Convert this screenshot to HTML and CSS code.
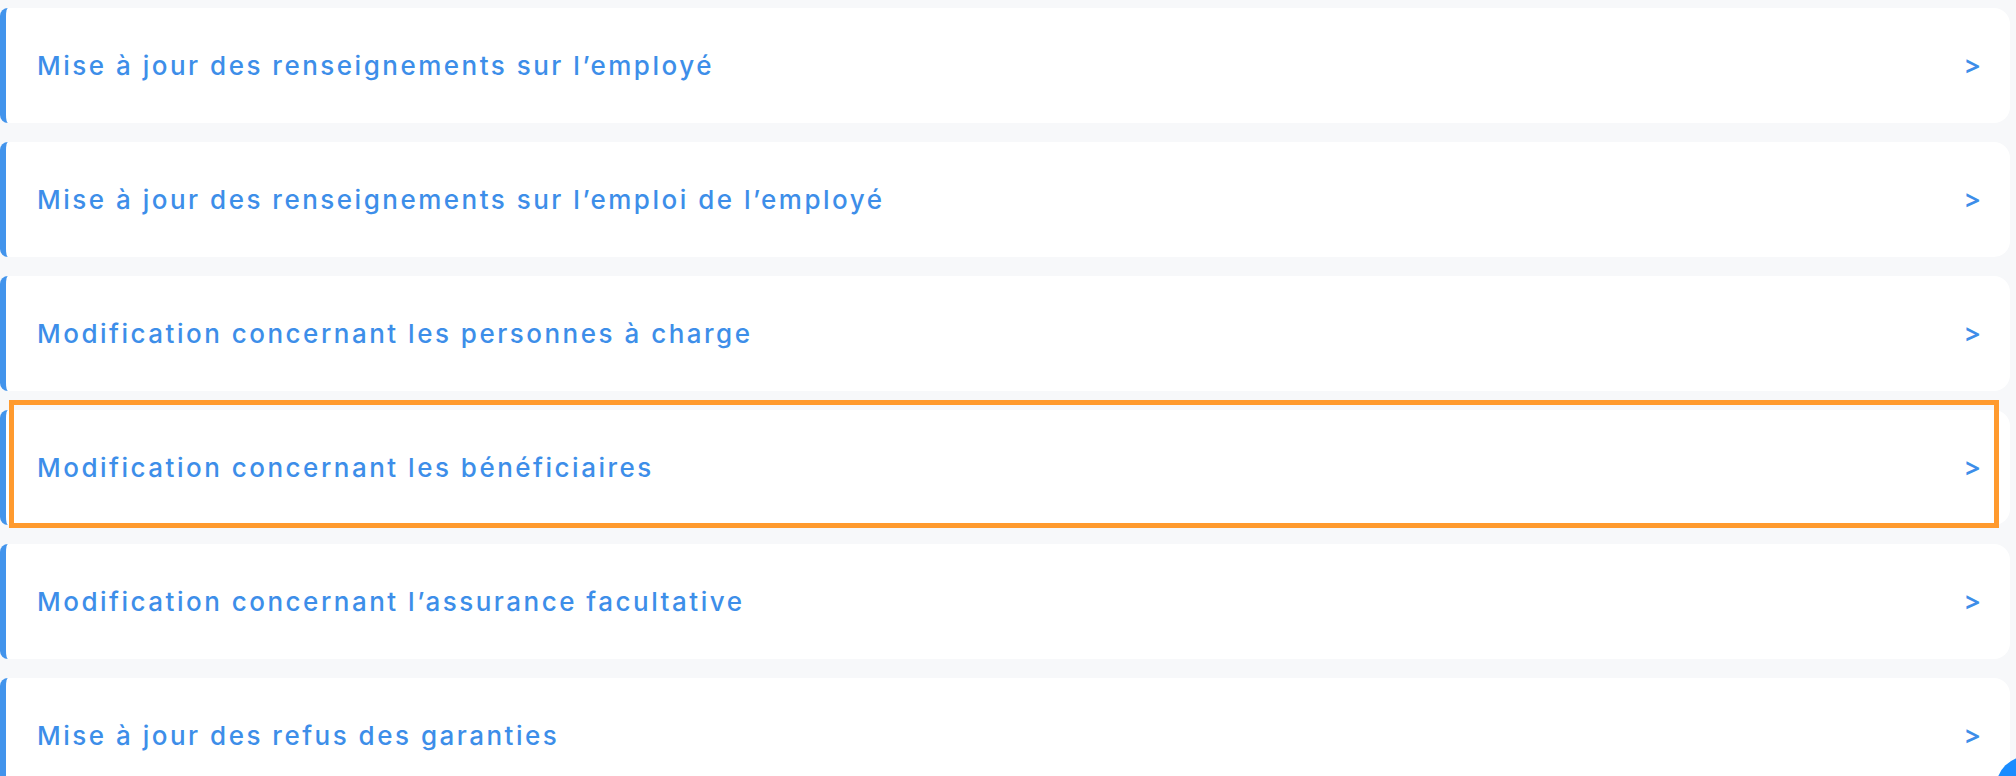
FILE: index.html
```html
<!DOCTYPE html>
<html lang="fr">
<head>
<meta charset="utf-8">
<title>Modifications</title>
<link rel="stylesheet" href="styles.css">
</head>
<body>
<main class="list">
  <a class="item" href="#"><span class="label">Mise à jour des renseignements sur l’employé</span><span class="chev">&gt;</span></a>
  <a class="item" href="#"><span class="label">Mise à jour des renseignements sur l’emploi de l’employé</span><span class="chev">&gt;</span></a>
  <a class="item" href="#"><span class="label">Modification concernant les personnes à charge</span><span class="chev">&gt;</span></a>
  <a class="item item-focus" href="#"><span class="label">Modification concernant les bénéficiaires</span><span class="chev">&gt;</span><span class="highlight"></span></a>
  <a class="item" href="#"><span class="label">Modification concernant l’assurance facultative</span><span class="chev">&gt;</span></a>
  <a class="item" href="#"><span class="label">Mise à jour des refus des garanties</span><span class="chev">&gt;</span></a>
</main>
<button class="fab" aria-label="Aide"></button>
</body>
</html>
```

FILE: styles.css
```css
html, body {
  margin: 0;
  padding: 0;
  background: #f7f8fa;
  overflow: hidden;
}
body {
  font-family: "Inter", "Open Sans", sans-serif;
  height: 776px;
}
.list {
  display: flex;
  flex-direction: column;
  gap: 19px;
  padding: 8px 6px 0 0;
}
.item {
  position: relative;
  display: flex;
  align-items: center;
  justify-content: space-between;
  height: 115px;
  box-sizing: border-box;
  background: #ffffff;
  border-left: 6px solid #4294ec;
  border-radius: 8px 16px 16px 8px;
  padding: 0 30px 0 31px;
  text-decoration: none;
  color: #3d8ee9;
}
.label {
  font-size: 26px;
  font-weight: 500;
  letter-spacing: 2.5px;
}
.chev {
  font-family: "Open Sans", sans-serif;
  font-size: 26px;
  font-weight: 700;
  color: #3d8ee9;
}
.highlight {
  position: absolute;
  left: 3px;
  top: -10px;
  width: 1990px;
  height: 128px;
  box-sizing: border-box;
  border: 5px solid #ff9a2e;
  pointer-events: none;
}
.fab {
  position: fixed;
  left: 1996px;
  top: 756px;
  width: 64px;
  height: 64px;
  border: 0;
  padding: 0;
  border-radius: 50%;
  background: #1a8cff;
}
```
